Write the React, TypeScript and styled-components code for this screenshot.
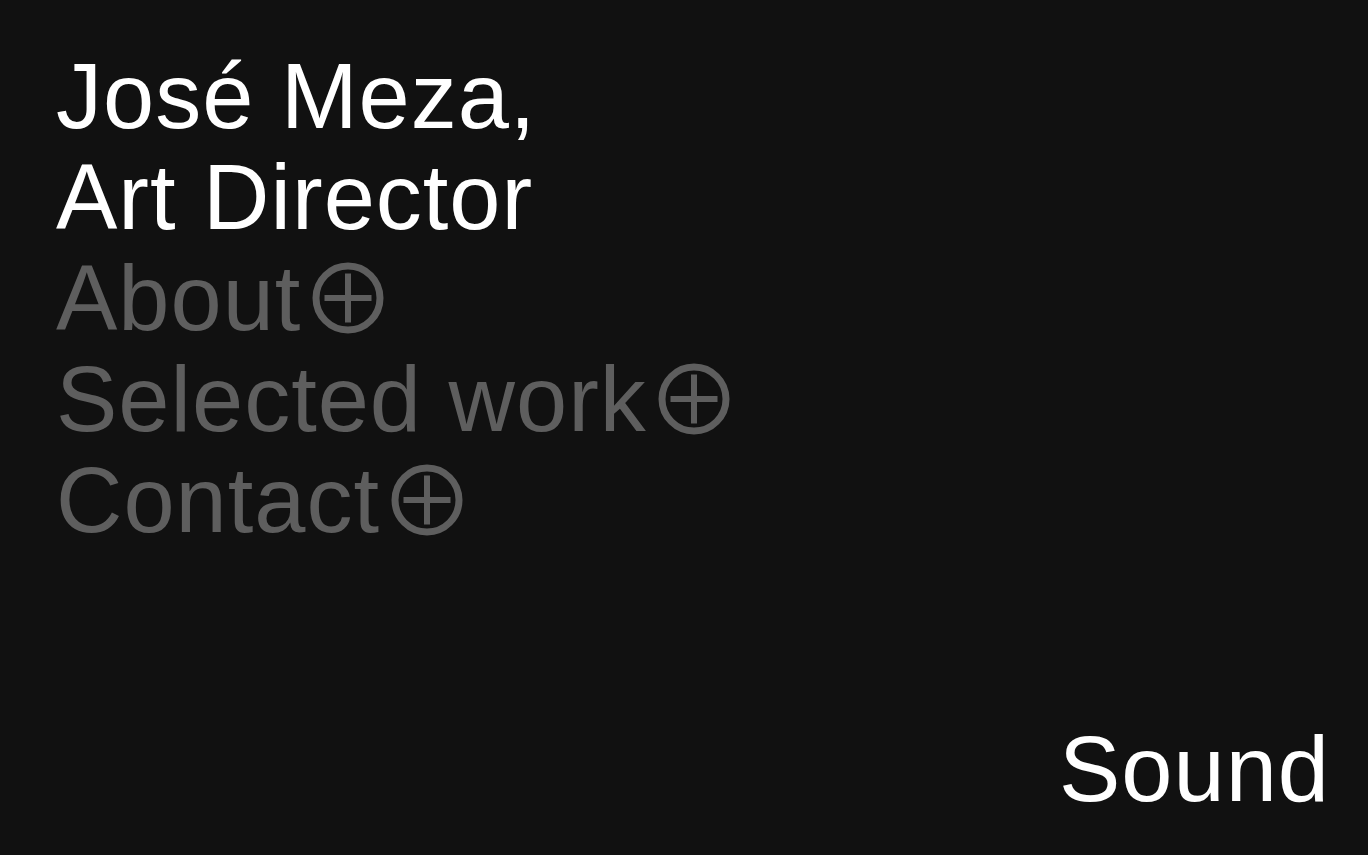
import React from "react";
import styled, { createGlobalStyle } from "styled-components";

const Global = createGlobalStyle`
  html, body { margin: 0; padding: 0; background: #111111; }
  body { font-family: "Liberation Sans", Arial, sans-serif; }
`;

const Page = styled.div`
  box-sizing: border-box;
  height: 100vh;
  display: flex;
  flex-direction: column;
  justify-content: space-between;
  padding: 46px 38px 35px 56px;
  background: #111111;
  color: #ffffff;
  font-size: 92px;
  line-height: 101px;
  letter-spacing: 1px;
`;

const Nav = styled.nav`
  display: flex;
  flex-direction: column;
`;

const Title = styled.h1`
  margin: 0;
  font: inherit;
  color: #ffffff;
`;

const Item = styled.a`
  display: block;
  color: #5e5e5e;
  text-decoration: none;
`;

const Plus = styled.svg`
  display: inline-block;
  width: 72px;
  height: 72px;
  margin-left: 11px;
  vertical-align: -4px;
`;

const Footer = styled.div`
  display: flex;
  justify-content: flex-end;
`;

const Sound = styled.button`
  all: unset;
  font: inherit;
  color: #ffffff;
  cursor: pointer;
`;

const CirclePlus = () => (
  <Plus viewBox="0 0 72 72">
    <circle cx="36" cy="36" r="32" fill="none" stroke="#5e5e5e" strokeWidth="7" />
    <rect x="12.5" y="33" width="47" height="6" fill="#5e5e5e" />
    <rect x="33" y="11.5" width="6" height="49" fill="#5e5e5e" />
  </Plus>
);

export default function App() {
  return (
    <>
      <Global />
      <Page>
        <Nav>
          <Title>
            José Meza,
            <br />
            Art Director
          </Title>
          {["About", "Selected work", "Contact"].map((t) => (
            <Item key={t} href="#">
              {t}
              <CirclePlus />
            </Item>
          ))}
        </Nav>
        <Footer>
          <Sound>Sound</Sound>
        </Footer>
      </Page>
    </>
  );
}
